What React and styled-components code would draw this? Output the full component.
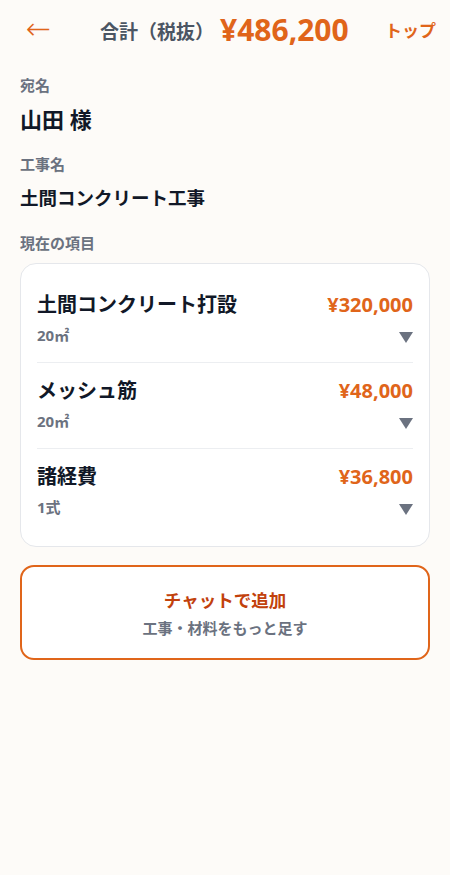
import React from "react";
import styled, { createGlobalStyle } from "styled-components";

const Global = createGlobalStyle`
  html, body {
    margin: 0;
    padding: 0;
    background: #fdfbf8;
    font-family: "Noto Sans", "Noto Sans CJK JP", sans-serif;
  }
`;

const Page = styled.div`
  width: 450px;
  min-height: 875px;
  background: #fdfbf8;
  box-sizing: border-box;
`;

const Header = styled.header`
  display: flex;
  align-items: center;
  height: 58px;
  padding: 0 14px 0 26px;
`;

const Back = styled.button`
  border: none;
  background: none;
  padding: 0;
  color: #e0651a;
  font-size: 30px;
  font-weight: 300;
  line-height: 1;
  width: 74px;
  text-align: left;
  cursor: pointer;
  font-family: "DejaVu Sans", sans-serif;
`;

const TotalLabel = styled.span`
  font-size: 19px;
  font-weight: 700;
  color: #4b5563;
  margin-top: 4px;
`;

const TotalValue = styled.span`
  font-size: 30px;
  font-weight: 700;
  color: #e0651a;
  margin-left: 6px;
`;

const TopLink = styled.a`
  margin-left: auto;
  font-size: 17px;
  font-weight: 700;
  color: #e0651a;
`;

const Body = styled.main`
  padding: 17px 20px 0 20px;
  display: flex;
  flex-direction: column;
`;

const Label = styled.div`
  font-size: 15px;
  font-weight: 700;
  color: #6b7280;
  line-height: 20px;
  margin-bottom: ${(p) => p.$gap || 10}px;
`;

const Value = styled.div`
  font-size: ${(p) => p.$size}px;
  font-weight: 700;
  color: #111827;
  line-height: 28px;
  margin-bottom: ${(p) => p.$after}px;
`;

const Card = styled.section`
  background: #ffffff;
  border: 1px solid #e5e7eb;
  border-radius: 16px;
  padding: 13px 16px 12px 16px;
`;

const Item = styled.div`
  padding: 14px 0 17px;
  border-top: ${(p) => (p.$first ? "none" : "1px solid #eceef1")};
`;

const ItemTop = styled.div`
  display: flex;
  justify-content: space-between;
  align-items: center;
  line-height: 28px;
`;

const ItemName = styled.span`
  font-size: 20px;
  font-weight: 700;
  color: #111827;
`;

const ItemPrice = styled.span`
  font-size: 20px;
  font-weight: 700;
  color: #e0651a;
`;

const ItemBottom = styled.div`
  display: flex;
  justify-content: space-between;
  align-items: center;
  margin-top: 6px;
  line-height: 20px;
`;

const Qty = styled.span`
  font-size: 15px;
  font-weight: 700;
  color: #6b7280;
`;

const Caret = styled.span`
  width: 0;
  height: 0;
  border-left: 7px solid transparent;
  border-right: 7px solid transparent;
  border-top: 11px solid #6b7280;
  margin-top: 4px;
`;

const AddButton = styled.button`
  margin-top: 18px;
  height: 95px;
  border: 2px solid #e0651a;
  border-radius: 14px;
  background: #ffffff;
  display: flex;
  flex-direction: column;
  align-items: center;
  justify-content: center;
  gap: 6px;
  font-family: inherit;
  cursor: pointer;
`;

const AddTitle = styled.span`
  font-size: 17.5px;
  font-weight: 700;
  color: #c2410c;
  line-height: 24px;
`;

const AddSub = styled.span`
  font-size: 15px;
  font-weight: 700;
  color: #6b7280;
  line-height: 20px;
`;

const items = [
  { name: "土間コンクリート打設", price: "¥320,000", qty: "20㎡" },
  { name: "メッシュ筋", price: "¥48,000", qty: "20㎡" },
  { name: "諸経費", price: "¥36,800", qty: "1式" },
];

export default function App() {
  return (
    <Page>
      <Global />
      <Header>
        <Back aria-label="戻る">←</Back>
        <TotalLabel>合計（税抜）</TotalLabel>
        <TotalValue>¥486,200</TotalValue>
        <TopLink>トップ</TopLink>
      </Header>
      <Body>
        <Label>宛名</Label>
        <Value $size={22} $after={21}>山田 様</Value>
        <Label>工事名</Label>
        <Value $size={18.5} $after={21}>土間コンクリート工事</Value>
        <Label>現在の項目</Label>
        <Card>
          {items.map((it, i) => (
            <Item key={it.name} $first={i === 0}>
              <ItemTop>
                <ItemName>{it.name}</ItemName>
                <ItemPrice>{it.price}</ItemPrice>
              </ItemTop>
              <ItemBottom>
                <Qty>{it.qty}</Qty>
                <Caret />
              </ItemBottom>
            </Item>
          ))}
        </Card>
        <AddButton>
          <AddTitle>チャットで追加</AddTitle>
          <AddSub>工事・材料をもっと足す</AddSub>
        </AddButton>
      </Body>
    </Page>
  );
}
